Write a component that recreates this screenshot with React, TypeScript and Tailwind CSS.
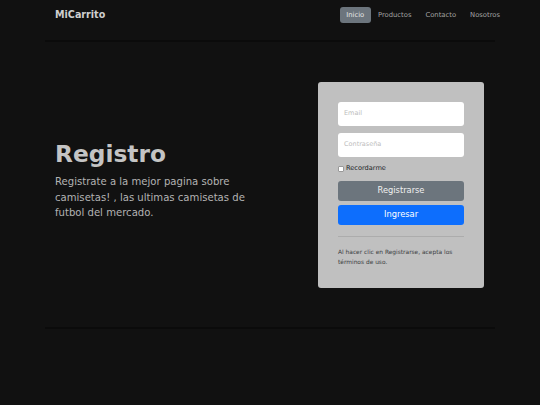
export default function App() {
  const font = { fontFamily: '"DejaVu Sans", sans-serif' };
  const links = ["Productos", "Contacto", "Nosotros"];

  return (
    <div
      className="w-[540px] h-[405px] bg-[#111111] overflow-hidden flex flex-col"
      style={font}
    >
      {/* header */}
      <div className="mx-[45px] border-b-2 border-[#0b0b0b] pb-[10px]">
        <div className="h-[30px] flex items-center justify-between pl-[10px] -mr-[12px]">
          <span className="text-[9.6px] font-bold text-[#cfcfcf] leading-none">
            MiCarrito
          </span>
          <nav className="flex items-center">
            <span className="h-[16px] px-[6.7px] flex items-center rounded-[3px] bg-[#6c757d] text-[6.8px] text-[#e8e8e8]">
              Inicio
            </span>
            {links.map((l) => (
              <span
                key={l}
                className="h-[16px] px-[7px] flex items-center text-[6.8px] text-[#a3a3a3]"
              >
                {l}
              </span>
            ))}
          </nav>
        </div>
      </div>

      {/* main */}
      <div className="mx-[45px] h-[287px] border-b-2 border-[#0b0b0b] px-[10px] flex items-center justify-between">
        <div className="w-[205px] -mt-[8px]">
          <h1 className="text-[23.3px] font-bold text-[#c4c4c4] leading-[1.2]">
            Registro
          </h1>
          <p className="text-[10.1px] text-[#b3b3b3] leading-[15.5px] mt-[6px]">
            Registrate a la mejor pagina sobre camisetas! , las ultimas camisetas
            de futbol del mercado.
          </p>
        </div>

        <div className="w-[166px] mr-[1px] rounded-[3px] bg-[#c0c0c0] px-[20px] pt-[20px] pb-[21px]">
          <div className="h-[24px] rounded-[3px] bg-white flex items-center px-[6px] text-[6.5px] text-[#bdbdbd]">
            Email
          </div>
          <div className="mt-[7px] h-[24px] rounded-[3px] bg-white flex items-center px-[6px] text-[6.5px] text-[#bdbdbd]">
            Contraseña
          </div>
          <div className="mt-[7px] h-[10px] flex items-center">
            <span className="w-[6px] h-[6px] bg-white border border-[#9a9a9a] rounded-[1px]" />
            <span className="ml-[2px] text-[6.6px] text-[#212529]">Recordarme</span>
          </div>
          <div className="mt-[7px] h-[20px] rounded-[3px] bg-[#6c757d] flex items-center justify-center text-[8.3px] text-[#f0f0f0]">
            Registrarse
          </div>
          <div className="mt-[4px] h-[20px] rounded-[3px] bg-[#0d6efd] flex items-center justify-center text-[8.3px] text-white">
            Ingresar
          </div>
          <div className="mt-[11px] h-px bg-[#acacac]" />
          <p className="mt-[10px] text-[5.9px] leading-[10px] text-[#3a3d40]">
            Al hacer clic en Registrarse, acepta los términos de uso.
          </p>
        </div>
      </div>
    </div>
  );
}
